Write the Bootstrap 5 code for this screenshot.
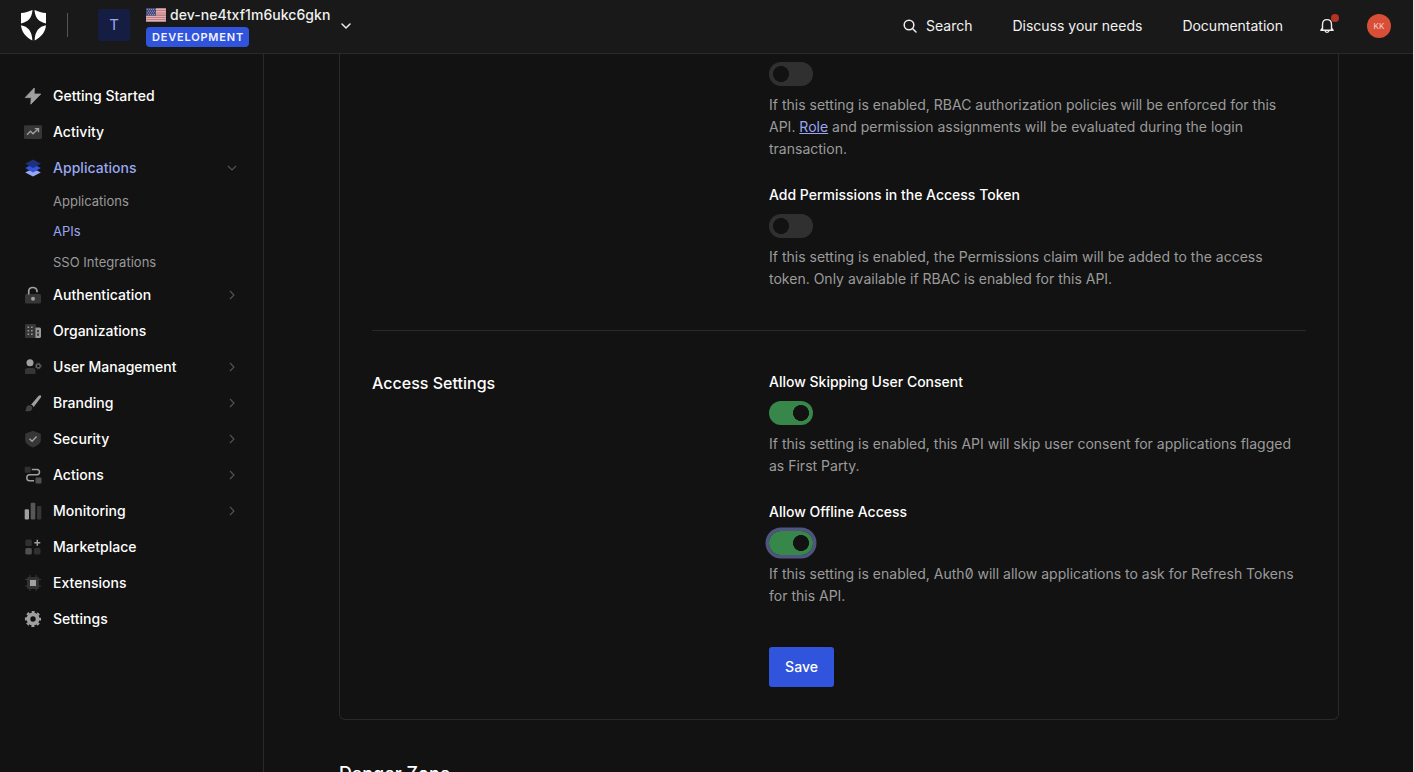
<!DOCTYPE html>
<html lang="en" data-bs-theme="dark">
<head>
<meta charset="utf-8">
<meta name="viewport" content="width=device-width, initial-scale=1">
<title>API Settings</title>
<link href="https://cdn.jsdelivr.net/npm/bootstrap@5.3.0/dist/css/bootstrap.min.css" rel="stylesheet">
<style>
  body { background: #121212; color: #fff; font-family: Inter, "Liberation Sans", sans-serif; font-size: 14px; line-height: 22px; letter-spacing: 0; font-feature-settings: "zero"; height: 100vh; overflow: hidden; border-right: 1px solid #e4e4e4; }
  .topbar { height: 54px; background: #191919; border-bottom: 1px solid #292929; padding: 0 22px 2px 20px; flex: none; }
  .topbar a { color: #f2f2f2; text-decoration: none; }
  .split { width: 1px; height: 24px; background: #555; margin: 0 30px 2px 20px; }
  .tenant-logo { width: 32px; height: 32px; border-radius: 2px; background: #151d42; color: #99a7f1; font-size: 15px; margin-bottom: 2px; }
  .tenant-name { font-size: 14px; line-height: 20px; font-weight: 500; color: #f0f0f0; letter-spacing: .05px; }
  .env { font-size: 11px; line-height: 20px; height: 20px; font-weight: 600; letter-spacing: .8px; padding: 0 5px 0 6px; border-radius: 4px; background: #3154dc; color: #f1f3ff; margin-top: 2px; }
  .dot { width: 8px; height: 8px; background: #b43423; top: -3px; right: -4px; }
  .avatar { width: 24px; height: 24px; background: #d84e36; color: #f5d5cf; font-size: 8px; letter-spacing: .15px; }
  .sidebar { width: 264px; border-right: 1px solid #292929; padding-top: 24px; flex: none; }
  .sidebar .nav-link { height: 36px; padding: 0 26px 0 24px; color: #fff; font-weight: 500; display: flex; align-items: center; letter-spacing: .03px; }
  .sidebar .nav-link.active { color: #99a7f1; }
  .sidebar .nav-link > svg:first-child { width: 18px; height: 18px; margin-right: 11px; overflow: visible; flex: none; }
  .sidebar .sub a { height: 30.33px; padding-left: 53px; color: #999; font-size: 13px; text-decoration: none; display: flex; align-items: center; letter-spacing: .01px; }
  .sidebar .sub a.active { color: #99a7f1; }
  .chev { width: 10px; height: 10px; margin-left: auto; fill: none; stroke: #555; stroke-width: 1.1; }
  .page { padding: 0 74px 0 75px; }
  .panel { height: 666px; border: 1px solid #292929; border-top: 0; border-radius: 0 0 6px 6px; padding: 0 32px; }
  .section-name { width: 397px; flex: none; font-size: 16px; line-height: 24px; font-weight: 500; letter-spacing: .02px; }
  .rule { height: 1px; background: #292929; margin: 40px 0 40px; }
  .field-name { font-weight: 500; margin-bottom: 8px; }
  .help { color: #9b9b9b; margin: 8px 0 0; white-space: nowrap; letter-spacing: .005px; }
  .help a { color: #99a7f1; }
  .toggle { appearance: none; display: block; width: 44px; height: 24px; border-radius: 12px; background: radial-gradient(circle at 12px 12px, #121212 7.7px, #303030 8.3px); margin: 0; }
  .toggle:checked { background: radial-gradient(circle at 32px 12px, #121212 7.7px, #37864a 8.3px); }
  .toggle.ring { box-shadow: 0 0 0 3.5px #4f5480; }
  .btn-save { background: #3154dc; color: #fff; font-size: 14px; font-weight: 500; width: 65px; height: 40px; padding: 0 0 1px; border-radius: 3px; border: 0; margin-top: 40px; }
  .danger { font-size: 18px; line-height: 28px; font-weight: 500; margin-top: 40px; letter-spacing: 0; white-space: nowrap; }
</style>
</head>
<body class="d-flex flex-column">
<header class="topbar d-flex align-items-center">
  <svg width="27" height="32" viewBox="0 0 27 32" fill="#fff"><path d="M1 3C5 2.7 9 1.6 12.5 0C12 8 8 12 1 13.4ZM26 3C22 2.7 18 1.6 14.5 0C15 8 19 12 26 13.4ZM1 15.2C8 16.5 12 21 12.4 30.5C6 27 1.5 22 1 15.2ZM26 15.2C19 16.5 15 21 14.6 30.5C21 27 25.5 22 26 15.2Z"/></svg>
  <div class="split"></div>
  <div class="tenant-logo d-flex align-items-center justify-content-center me-3">T</div>
  <div class="d-flex flex-column align-items-start">
    <div class="tenant-name d-flex align-items-center">
      <svg class="me-1" width="20" height="14" viewBox="0 0 20 14"><rect width="20" height="14" rx="1" fill="#ddd3d3"/><path d="M0 .7H20M0 2.8H20M0 5H20M0 7.1H20M0 9.2H20M0 11.3H20M0 13.3H20" stroke="#c06067" stroke-width="1.1"/><rect width="10" height="7.6" fill="#41497d"/><path d="M1 1.5H9.5M2 3.2H9M1 4.9H9.5M2 6.5H9" stroke="#a5a8bf" stroke-width=".8" stroke-dasharray="1 1"/></svg>
      <span>dev-ne4txf1m6ukc6gkn</span>
    </div>
    <span class="env">DEVELOPMENT</span>
  </div>
  <svg class="ms-2" width="16" height="16" viewBox="0 0 16 16" fill="none" stroke="#eee" stroke-width="1.5" stroke-linecap="round" stroke-linejoin="round"><path d="M4 6l4 4 4-4"/></svg>
  <nav class="d-flex align-items-center ms-auto">
    <a href="#" class="d-flex align-items-center"><svg class="me-2" width="16" height="16" viewBox="0 0 16 16" fill="none" stroke="#eee" stroke-width="1.5" stroke-linecap="round"><circle cx="7" cy="7" r="4.8"/><path d="M10.5 10.5L14 14"/></svg>Search</a>
    <a href="#" style="margin-left:40px">Discuss your needs</a>
    <a href="#" style="margin-left:40px">Documentation</a>
    <a href="#" class="position-relative d-flex" style="margin-left:36px"><svg width="16" height="18" viewBox="0 0 16 18" fill="none" stroke="#eee" stroke-width="1.4" stroke-linejoin="round"><path d="M3.5 12.8V7.5C3.5 4.3 5.3 2.6 8 2.6S12.5 4.3 12.5 7.5V12.8M1.3 13.3H14.7M3.5 11L2 13.3M12.5 11L14 13.3M6 13.5C6.3 16 9.7 16 10 13.5"/></svg><span class="dot position-absolute rounded-circle"></span></a>
    <span class="avatar rounded-circle d-flex align-items-center justify-content-center" style="margin-left:32px">KK</span>
  </nav>
</header>
<div class="d-flex flex-grow-1 overflow-hidden">
  <aside class="sidebar">
    <nav class="nav flex-column flex-nowrap">
      <a class="nav-link" href="#"><svg viewBox="0 0 18 18"><path d="M10.3 1L1.2 10.6H7.2L6.8 17.2L16.8 7H10.2Z" fill="#a0a0a0" stroke="#a0a0a0" stroke-width=".8" stroke-linejoin="round"/></svg>Getting Started</a>
      <a class="nav-link" href="#"><svg viewBox="0 0 18 18"><rect y="2.2" width="18" height="13.8" rx="1.2" fill="#363636"/><path d="M3 11.7L6.5 8.2L9 10.7L14 6M10.8 5.6H14.5V9.3" fill="none" stroke="#a0a0a0" stroke-width="1.4"/></svg>Activity</a>
      <a class="nav-link active" href="#"><svg viewBox="0 0 18 18"><path d="M1.2 13.5L5 11.4H13L16.8 13.5L9 17.6Z" fill="#99a7f1"/><path d="M1.2 9L5 7H13L16.8 9L9 13.5Z" fill="#3154dc"/><path d="M1.2 4.7L9 .5L16.8 4.7L9 9Z" fill="#20307a"/></svg>Applications<svg class="chev" viewBox="0 0 10 10"><path d="M1 3L5 7L9 3"/></svg></a>
      <div class="sub">
        <a href="#">Applications</a>
        <a href="#" class="active">APIs</a>
        <a href="#">SSO Integrations</a>
      </div>
      <a class="nav-link" href="#"><svg viewBox="0 0 18 18"><rect x="1" y="8" width="16" height="9.6" rx="1.5" fill="#363636"/><path d="M4.7 8.5V5.5C4.7 .2 13 .2 13 5.2V6.3" fill="none" stroke="#a0a0a0" stroke-width="1.7"/><circle cx="9" cy="12.8" r="2" fill="#a0a0a0"/></svg>Authentication<svg class="chev" viewBox="0 0 10 10"><path d="M3 1L7 5L3 9"/></svg></a>
      <a class="nav-link" href="#"><svg viewBox="0 0 18 18"><rect x="1" y="2" width="11" height="14" rx="1" fill="#363636"/><path d="M3.6 5.2H9M3.6 8.7H9M3.6 12.2H9" stroke="#a0a0a0" stroke-width="1.5" stroke-dasharray="1.5 2"/><path d="M12 5.5H15.7Q17 5.5 17 7V14.6Q17 16 15.7 16H11.5V6Z" fill="#999"/><path d="M14 8V10.2M14 11.6V13.7" stroke="#252525" stroke-width="1.5"/></svg>Organizations</a>
      <a class="nav-link" href="#"><svg viewBox="0 0 18 18"><circle cx="6" cy="4.8" r="3.5" fill="#a0a0a0"/><path d="M1 16V12.8Q1 10 4 10H8.8Q11.5 10 11.5 12.8V16Z" fill="#363636"/><circle cx="14.3" cy="8" r="1.9" fill="none" stroke="#606060" stroke-width="1.3"/><circle cx="14.3" cy="8" r="2.9" fill="none" stroke="#606060" stroke-width="1" stroke-dasharray="1.2 1.077"/></svg>User Management<svg class="chev" viewBox="0 0 10 10"><path d="M3 1L7 5L3 9"/></svg></a>
      <a class="nav-link" href="#"><svg viewBox="0 0 18 18"><path d="M1 17C3 15.5 1.5 13.8 3.2 12C5.5 9.8 9.8 13 7.8 15.7C6.5 17.5 3.5 17.4 1 17Z" fill="#424242"/><path d="M7 10.8L14.2 2.2C15.7 .5 17.8 1 17 3.2L9.5 13.2C9.3 12 8.3 11 7 10.8Z" fill="#a0a0a0"/></svg>Branding<svg class="chev" viewBox="0 0 10 10"><path d="M3 1L7 5L3 9"/></svg></a>
      <a class="nav-link" href="#"><svg viewBox="0 0 18 18"><path d="M9 .8L16.8 3.8V10C16.8 13.5 13.4 15.7 9 17.4C4.6 15.7 1.2 13.5 1.2 10V3.8Z" fill="#363636"/><path d="M5.5 8.8L8.1 11.3L12.6 6.6" fill="none" stroke="#a0a0a0" stroke-width="1.5"/></svg>Security<svg class="chev" viewBox="0 0 10 10"><path d="M3 1L7 5L3 9"/></svg></a>
      <a class="nav-link" href="#"><svg viewBox="0 0 18 18"><rect x=".7" y=".7" width="6" height="6" rx="1" fill="#303030"/><rect x="11.5" y="11.5" width="6" height="6" rx="1" fill="#505050"/><path d="M7.8 3.4H13Q15.5 3.5 15.5 6T13 8.8H5.5Q2.8 8.8 2.8 11.7T5.5 14.8H10" fill="none" stroke="#a0a0a0" stroke-width="1.5"/></svg>Actions<svg class="chev" viewBox="0 0 10 10"><path d="M3 1L7 5L3 9"/></svg></a>
      <a class="nav-link" href="#"><svg viewBox="0 0 18 18"><rect x=".7" y="7.2" width="4.3" height="10.3" rx="1.1" fill="#a0a0a0"/><rect x="6.7" y=".8" width="4.6" height="16.7" rx="1.1" fill="#575757"/><rect x="13" y="4" width="4.3" height="13.5" rx="1.1" fill="#363636"/></svg>Monitoring<svg class="chev" viewBox="0 0 10 10"><path d="M3 1L7 5L3 9"/></svg></a>
      <a class="nav-link" href="#"><svg viewBox="0 0 18 18"><rect x="1.3" y="1.5" width="6.5" height="6.5" rx="1.5" fill="#303030"/><rect x="1.3" y="10" width="6.5" height="6.5" rx="1.5" fill="#505050"/><rect x="10" y="10" width="6.5" height="6.5" rx="1.5" fill="#303030"/><path d="M13.3 1.8V7.8M10.3 4.8H16.3" stroke="#a0a0a0" stroke-width="1.5"/></svg>Marketplace</a>
      <a class="nav-link" href="#"><svg viewBox="0 0 18 18"><rect x="3" y="3" width="12" height="12" rx="1" fill="#303030"/><path d="M6 1V17M12 1V17M1 5.5H17M1 12H17" stroke="#363636" stroke-width="1"/><rect x="6" y="6" width="6" height="6" fill="#a0a0a0"/></svg>Extensions</a>
      <a class="nav-link" href="#"><svg viewBox="0 0 18 18"><circle cx="9" cy="9" r="4.6" fill="none" stroke="#a0a0a0" stroke-width="3.8"/><circle cx="9" cy="9" r="7.1" fill="none" stroke="#a0a0a0" stroke-width="2" stroke-dasharray="3 2.576" stroke-dashoffset="1.5"/></svg>Settings</a>
    </nav>
  </aside>
  <main class="page flex-grow-1 overflow-hidden">
    <section class="panel">
      <div class="d-flex">
        <div class="section-name"></div>
        <div class="pt-2">
          <input class="toggle" type="checkbox" aria-label="Enable RBAC">
          <p class="help">If this setting is enabled, RBAC authorization policies will be enforced for this<br>API. <a href="#">Role</a> and permission assignments will be evaluated during the login<br>transaction.</p>
          <div class="field-name" style="margin-top:24px">Add Permissions in the Access Token</div>
          <input class="toggle" type="checkbox" aria-label="Add Permissions">
          <p class="help">If this setting is enabled, the Permissions claim will be added to the access<br>token. Only available if RBAC is enabled for this API.</p>
        </div>
      </div>
      <div class="rule"></div>
      <div class="d-flex">
        <h2 class="section-name mb-0">Access Settings</h2>
        <div>
          <div class="field-name">Allow Skipping User Consent</div>
          <input class="toggle" type="checkbox" checked aria-label="Skip consent">
          <p class="help">If this setting is enabled, this API will skip user consent for applications flagged<br>as First Party.</p>
          <div class="field-name" style="margin-top:24px">Allow Offline Access</div>
          <input class="toggle ring" type="checkbox" checked aria-label="Offline access">
          <p class="help">If this setting is enabled, Auth0 will allow applications to ask for Refresh Tokens<br>for this API.</p>
          <button class="btn btn-save">Save</button>
        </div>
      </div>
    </section>
    <h2 class="danger">Danger Zone</h2>
  </main>
</div>
<script src="https://cdn.jsdelivr.net/npm/bootstrap@5.3.0/dist/js/bootstrap.bundle.min.js"></script>
</body>
</html>
